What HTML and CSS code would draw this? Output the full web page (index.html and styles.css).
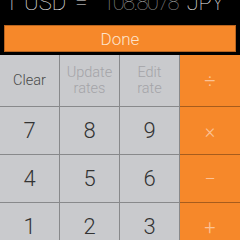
FILE: index.html
```html
<!DOCTYPE html>
<html>
<head>
<meta charset="utf-8">
<link rel="stylesheet" href="styles.css">
</head>
<body>
<div class="app">
  <div class="display">
    <div class="readout"><span class="one">1</span><span class="unit">USD</span><span class="eq">=</span><span class="value">108.8078</span><span class="cur">JPY</span></div>
  </div>
  <div class="done">Done</div>
  <div class="pad">
    <div class="key fn">Clear</div>
    <div class="key fn off">Update<br>rates</div>
    <div class="key fn off">Edit<br>rate</div>
    <div class="key op">÷</div>
    <div class="key">7</div>
    <div class="key">8</div>
    <div class="key">9</div>
    <div class="key op">×</div>
    <div class="key">4</div>
    <div class="key">5</div>
    <div class="key">6</div>
    <div class="key op">−</div>
    <div class="key">1</div>
    <div class="key">2</div>
    <div class="key">3</div>
    <div class="key op">+</div>
  </div>
</div>
</body>
</html>
```
FILE: styles.css
```css
html, body {
  margin: 0;
  padding: 0;
  background: #000;
  overflow: hidden;
}
.app {
  width: 240px;
  height: 240px;
  display: flex;
  flex-direction: column;
  font-family: Roboto, "Liberation Sans", sans-serif;
  font-weight: 300;
}
.display {
  height: 25px;
  overflow: hidden;
  flex: none;
}
.readout {
  margin-top: -8px;
  padding-left: 5px;
  font-size: 22px;
  line-height: 22px;
  font-weight: 100;
  white-space: nowrap;
  display: flex;
  color: #f0f0f0;
}
.readout .unit {
  margin-left: 7px;
}
.readout .eq {
  margin-left: 9px;
}
.readout .value {
  color: #8d8d8d;
  margin-left: 15px;
  letter-spacing: -1.7px;
}
.readout .cur {
  margin-left: 9px;
  letter-spacing: -0.5px;
}
.done {
  flex: none;
  margin: 0 4px;
  height: 25px;
  border: 1px solid #b8641f;
  background: #f6882a;
  color: #fde3cc;
  font-size: 17px;
  display: flex;
  align-items: center;
  justify-content: center;
}
.pad {
  margin-top: 3px;
  display: grid;
  grid-template-columns: repeat(4, 60px);
  grid-template-rows: 52px 48px 48px 48px;
}
.key {
  background: #c9cacd;
  border-right: 1px solid rgba(0, 0, 0, 0.32);
  border-bottom: 1px solid rgba(0, 0, 0, 0.32);
  display: flex;
  align-items: center;
  justify-content: center;
  color: #333;
  font-size: 22px;
  text-align: center;
}
.key.fn {
  font-size: 14.5px;
  line-height: 16px;
  color: #4a4a4a;
}
.key.off {
  color: #a4a4a8;
}
.key.op {
  background: #f6882a;
  color: #fbc296;
  font-size: 20px;
  font-weight: 300;
  border-right: none;
}
```
